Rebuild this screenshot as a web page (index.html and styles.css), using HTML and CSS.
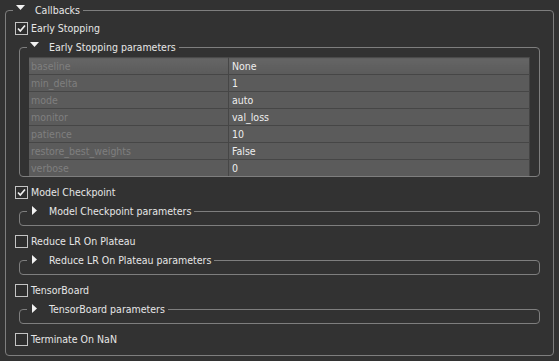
FILE: index.html
```html
<!DOCTYPE html>
<html>
  <head>
    <meta charset="utf-8">
    <title>Callbacks</title>
    <link rel="stylesheet" href="styles.css">
  </head>
  <body>
    <fieldset class="group">
      <legend class="group-title"><span class="arrow"><svg width="9" height="9" viewBox="0 0 9 9"><path d="M0 0H9L4.5 5Z"/></svg></span>Callbacks</legend>

      <label class="check-row"><span class="check"><svg width="11" height="11" viewBox="0 0 11 11"><path d="M2 5.5L4.3 8L9 2.5"/></svg></span>Early Stopping</label>
      <fieldset class="group sub">
        <legend class="group-title"><span class="arrow"><svg width="9" height="9" viewBox="0 0 9 9"><path d="M0 0H9L4.5 5Z"/></svg></span>Early Stopping parameters</legend>
        <table class="params">
          <tr class="first"><td class="key">baseline</td><td class="val">None</td></tr>
          <tr><td class="key">min_delta</td><td class="val">1</td></tr>
          <tr><td class="key">mode</td><td class="val">auto</td></tr>
          <tr><td class="key">monitor</td><td class="val">val_loss</td></tr>
          <tr><td class="key">patience</td><td class="val">10</td></tr>
          <tr><td class="key">restore_best_weights</td><td class="val">False</td></tr>
          <tr><td class="key">verbose</td><td class="val">0</td></tr>
        </table>
      </fieldset>

      <label class="check-row"><span class="check"><svg width="11" height="11" viewBox="0 0 11 11"><path d="M2 5.5L4.3 8L9 2.5"/></svg></span>Model Checkpoint</label>
      <fieldset class="group sub closed">
        <legend class="group-title"><span class="arrow"><svg width="9" height="9" viewBox="0 0 9 9"><path d="M2 0L7 4.5L2 9Z"/></svg></span>Model Checkpoint parameters</legend>
      </fieldset>

      <label class="check-row"><span class="check"></span>Reduce LR On Plateau</label>
      <fieldset class="group sub closed">
        <legend class="group-title"><span class="arrow"><svg width="9" height="9" viewBox="0 0 9 9"><path d="M2 0L7 4.5L2 9Z"/></svg></span>Reduce LR On Plateau parameters</legend>
      </fieldset>

      <label class="check-row"><span class="check"></span>TensorBoard</label>
      <fieldset class="group sub closed">
        <legend class="group-title"><span class="arrow"><svg width="9" height="9" viewBox="0 0 9 9"><path d="M2 0L7 4.5L2 9Z"/></svg></span>TensorBoard parameters</legend>
      </fieldset>

      <label class="check-row"><span class="check"></span>Terminate On NaN</label>
    </fieldset>
  </body>
</html>
```

FILE: styles.css
```css
html, body {
  margin: 0;
  background-color: #323232;
}
body {
  padding: 3px 5px 0;
  color: #e6e6e6;
  font-family: "DejaVu Sans Condensed", "Liberation Sans", sans-serif;
  font-size: 10.5px;
}
.group {
  margin: 0;
  min-width: 0;
  border: 1px solid #7e7e7e;
  border-radius: 4px;
  padding: 3px 13px 8px 9px;
}
.group.sub {
  margin: 4px 0 0 4px;
  padding: 3px 9px 0 9px;
}
.group.closed {
  padding: 0 9px 7px 9px;
}
.group-title {
  display: flex;
  align-items: center;
  height: 14px;
  line-height: 14px;
  margin-left: -2px;
  padding: 0 3px;
  white-space: nowrap;
}
.arrow {
  display: block;
  width: 9px;
  height: 9px;
  margin: 0 10px 0 0;
  position: relative;
  top: -1px;
}
.arrow svg {
  display: block;
  fill: #f2f2f2;
}
.check-row {
  display: flex;
  align-items: center;
  height: 16px;
  gap: 3px;
}
.group.sub + .check-row {
  margin-top: 7px;
}
.check {
  width: 11px;
  height: 11px;
  border: 1px solid #c4c4c4;
  background-color: #2e2e2e;
}
.check svg {
  display: block;
  fill: none;
  stroke: #f0f0f0;
  stroke-width: 1.7;
}
.params {
  width: 501px;
  border-collapse: collapse;
  table-layout: fixed;
  background-color: #5b5b5b;
  border-top: 1px solid #4a4a4a;
  border-right: 1px solid #444444;
}
.params td {
  height: 16px;
  padding: 0 0 0 2px;
  border-bottom: 1px solid #464646;
  line-height: 16px;
  white-space: nowrap;
  overflow: hidden;
}
.params tr:last-child td {
  border-bottom: none;
}
.params .key {
  width: 197px;
  color: #7f7f7f;
  border-right: 1px solid #464646;
}
.params .val {
  padding-left: 3px;
  color: #eeeeee;
}
.params .first td {
  background: linear-gradient(#656565, #5b5b5b);
}
```
